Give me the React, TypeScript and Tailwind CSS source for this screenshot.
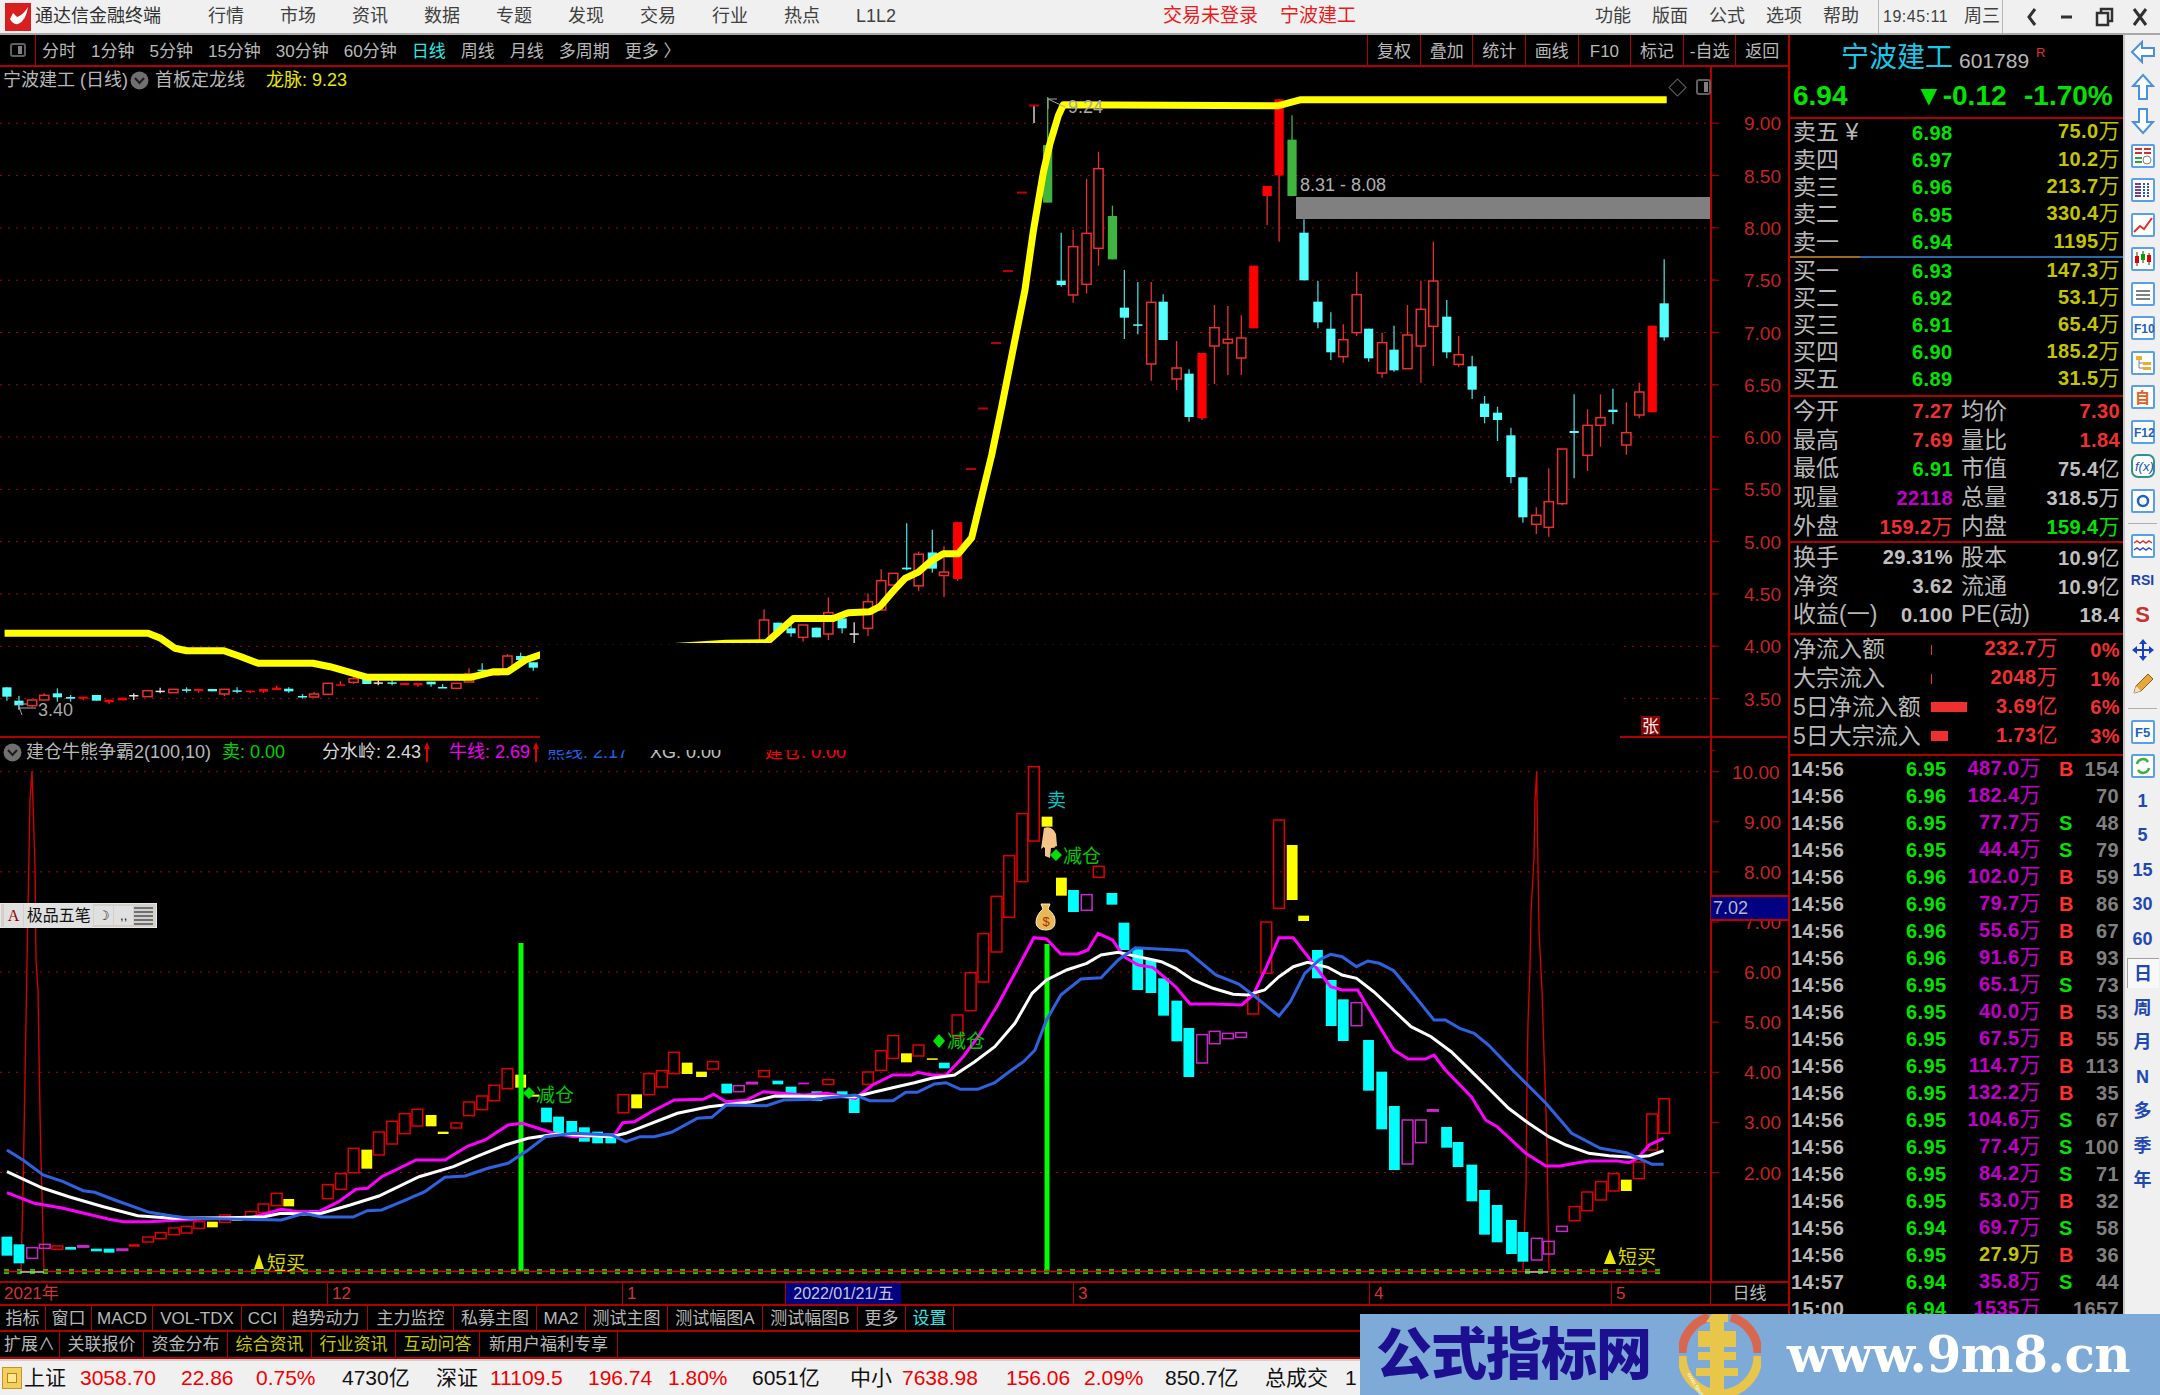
import type { ReactNode } from "react";

type Pt = [number, number];
type Candle = [string, number, number, number, number?, number?];

const z6 = (x: number, y: number): Pt => [1000 + x / 2.01, 60 + y / 3];
const z7 = (x: number, y: number): Pt => [x / 1.742, 560 + y / 3];
const z8 = (x: number, y: number): Pt => [880 + x / 1.742, 760 + y / 3];
const z9 = (x: number, y: number): Pt => [x / 1.742, 960 + y / 3];
const z11 = (x: number, y: number): Pt => [780 + x / 3, 90 + y / 2.904];

const line = (src: number[], map: (x: number, y: number) => Pt) => {
  const out: string[] = [];
  for (let i = 0; i < src.length; i += 2) {
    const [x, y] = map(src[i], src[i + 1]);
    out.push(`${x.toFixed(1)},${y.toFixed(1)}`);
  }
  return out.join(" ");
};

// candles read off the reference: kind, x, body top, body bottom, high, low
const mainLeft: Candle[] = [
  ["C", 12, 382, 410, 382, 422], ["C", 33, 422, 436, 408, 450], ["H", 56, 420, 437, 420, 442], ["H", 77, 406, 420, 400, 420],
  ["C", 100, 400, 412, 385, 425], ["C", 123, 411, 416, 405, 425], ["R", 145, 410, 416, 410, 420], ["C", 168, 405, 422],
  ["R", 190, 419, 427, 419, 431], ["R", 213, 413, 421], ["W", 233, 405, 406, 400, 420], ["H", 257, 392, 410], ["W", 279, 392, 393, 383, 400],
  ["H", 302, 388, 398], ["C", 325, 388, 391, 382, 398], ["R", 346, 387, 393, 387, 398], ["C", 370, 387, 394], ["H", 391, 388, 402, 388, 408],
  ["C", 413, 391, 394, 382, 400], ["R", 436, 392, 394, 392, 399], ["R", 459, 387, 395, 387, 399], ["R", 482, 383, 390, 377, 390],
  ["C", 503, 386, 394, 382, 398], ["C", 527, 408, 411, 402, 416], ["H", 547, 402, 411, 396, 411], ["H", 571, 370, 403], ["R", 593, 373, 375, 363, 375],
  ["H", 616, 356, 367, 350, 372], ["C", 639, 356, 372], ["W", 659, 367, 368, 360, 376], ["C", 683, 367, 371, 360, 376], ["R", 705, 369, 375],
  ["R", 728, 369, 376, 369, 380], ["C", 751, 365, 373, 365, 380], ["C", 771, 381, 384, 372, 384], ["H", 795, 370, 385], ["H", 817, 342, 366, 325, 366],
  ["C", 840, 329, 332, 310, 337], ["H", 862, 330, 345], ["H", 884, 288, 327, 282, 327], ["C", 907, 288, 300, 278, 305], ["C", 929, 307, 323, 307, 332],
  ["H", 1331, 180, 250, 148], ["C", 1355, 188, 215], ["C", 1378, 205, 220, 195, 230], ["H", 1399, 195, 232, 195, 245], ["C", 1422, 203, 232],
  ["H", 1443, 158, 222, 112, 240], ["C", 1467, 175, 205, 175, 220], ["W", 1488, 220, 222, 187, 250], ["H", 1512, 125, 205, 100, 228],
  ["H", 1535, 62, 150, 28, 150], ["H", 1556, 40, 75, 40, 75],
];

const mainMid: Candle[] = [
  ["C", 380, 1387, 1392, 1258, 1395], ["H", 416, 1348, 1440, 1340, 1455], ["C", 457, 1343, 1390, 1277, 1402],
  ["H", 492, 1400, 1410, 1325, 1472], ["R", 533, 1255, 1420, 1255, 1425], ["G", 803, 160, 327, 20, 327],
];

const mainRight: Candle[] = [
  ["C", 123, 662, 675, 518, 680], ["H", 147, 560, 705, 510, 728], ["H", 174, 520, 673, 357, 700], ["H", 198, 326, 565, 275, 617],
  ["G", 226, 468, 598, 437, 598], ["C", 250, 743, 773, 630, 837], ["C", 277, 793, 796, 666, 823], ["H", 304, 727, 912, 666, 962],
  ["C", 328, 725, 840, 703, 840], ["H", 355, 924, 957, 843, 990], ["C", 380, 941, 1071, 928, 1085], ["R", 406, 879, 1075, 879, 1080],
  ["H", 431, 803, 858, 735, 972], ["H", 458, 838, 849, 738, 945], ["H", 485, 834, 894, 766, 945], ["R", 510, 617, 805],
  ["R", 537, 378, 408, 378, 495], ["R", 561, 118, 346, 118, 545], ["G", 587, 239, 408, 166, 408], ["C", 611, 518, 661, 478, 661],
  ["C", 639, 725, 787, 662, 805], ["C", 665, 806, 877, 757, 900], ["H", 690, 839, 890, 793, 908], ["H", 717, 704, 818, 635, 828],
  ["C", 741, 806, 895, 806, 905], ["H", 768, 848, 939, 818, 953], ["C", 792, 869, 931, 797, 935], ["H", 819, 825, 926, 735, 926],
  ["H", 846, 748, 858, 662, 968], ["H", 871, 663, 799, 545, 918], ["C", 898, 770, 877, 720, 895], ["H", 922, 884, 913, 828, 922],
  ["C", 949, 919, 989, 887, 1017], ["C", 974, 1031, 1071, 1008, 1090], ["C", 1000, 1058, 1080, 1040, 1143], ["C", 1027, 1126, 1251, 1103, 1270],
  ["C", 1051, 1252, 1372, 1252, 1388], ["H", 1078, 1366, 1393, 1342, 1422], ["H", 1103, 1325, 1402, 1225, 1430], ["H", 1130, 1167, 1331, 1167, 1336],
  ["C", 1154, 1113, 1119, 1003, 1255], ["H", 1181, 1096, 1186, 1048, 1233], ["H", 1207, 1073, 1096, 1003, 1160], ["C", 1232, 1049, 1056, 986, 1093],
  ["H", 1259, 1118, 1155, 1027, 1184], ["H", 1285, 996, 1065, 968, 1075], ["R", 1311, 797, 1057], ["C", 1335, 730, 832, 598, 842],
];

const subLeft: Candle[] = [
  ["c", 12, 830, 887], ["c", 33, 853, 910], ["m", 56, 863, 895], ["m", 78, 853, 865], ["r", 100, 858, 868], ["c", 123, 861, 869], ["m", 145, 857, 859],
  ["c", 168, 866, 874], ["c", 190, 866, 878], ["m", 213, 867, 869], ["f", 234, 853, 860], ["r", 258, 831, 846], ["r", 280, 818, 836], ["r", 303, 804, 824],
  ["r", 325, 799, 819], ["r", 347, 785, 805], ["y", 370, 785, 802], ["r", 392, 765, 787], ["y", 413, 770, 783], ["r", 437, 755, 775], ["r", 459, 732, 757],
  ["r", 482, 700, 737], ["y", 503, 717, 739], ["y", 527, 752, 760], ["c", 547, 750, 760], ["r", 571, 674, 716], ["r", 594, 641, 688], ["r", 616, 565, 638],
  ["y", 639, 569, 626], ["r", 660, 516, 585], ["r", 683, 484, 552], ["r", 705, 461, 521], ["r", 727, 448, 498], ["y", 751, 465, 499], ["y", 772, 515, 522],
  ["r", 795, 489, 504], ["r", 817, 426, 467], ["r", 840, 408, 449], ["r", 861, 376, 422], ["r", 884, 326, 386], ["y", 907, 344, 383], ["y", 930, 404, 410],
  ["c", 952, 443, 487], ["c", 973, 470, 520], ["c", 996, 483, 520], ["c", 1018, 502, 545], ["c", 1041, 515, 550], ["c", 1064, 520, 550], ["r", 1086, 404, 458],
  ["y", 1109, 403, 445], ["r", 1131, 341, 404], ["r", 1153, 332, 381], ["r", 1174, 277, 341], ["y", 1197, 308, 342], ["y", 1222, 335, 351], ["r", 1242, 305, 327],
  ["c", 1266, 371, 400], ["m", 1287, 377, 395], ["m", 1310, 367, 369], ["r", 1331, 332, 350], ["c", 1355, 362, 373], ["c", 1378, 380, 405], ["n", 1400, 368, 373],
  ["c", 1423, 394, 423], ["r", 1443, 359, 373], ["c", 1467, 394, 408], ["c", 1488, 410, 459], ["r", 1512, 336, 373], ["r", 1535, 272, 331], ["r", 1556, 227, 295],
];

const subRight: Candle[] = [
  ["r", 67, 855, 888], ["y", 46, 880, 907], ["y", 91, 895, 898], ["c", 112, 908, 925], ["r", 135, 765, 830], ["r", 158, 638, 752], ["r", 180, 521, 666],
  ["r", 203, 409, 576], ["r", 225, 287, 472], ["r", 248, 161, 365], ["r", 268, 20, 243], ["y", 291, 170, 200], ["y", 295, 255, 263], ["r", 381, 319, 352],
  ["y", 316, 353, 407], ["c", 337, 390, 456], ["m", 360, 404, 451], ["c", 404, 399, 434], ["c", 425, 488, 570], ["c", 449, 565, 690], ["c", 472, 600, 699],
  ["c", 494, 655, 767], ["c", 517, 722, 844], ["c", 538, 804, 951], ["m", 561, 824, 909], ["m", 583, 814, 851], ["m", 606, 820, 836], ["m", 629, 818, 832],
  ["r", 650, 705, 762], ["r", 673, 486, 640], ["r", 695, 180, 445], ["y", 718, 255, 420], ["y", 738, 467, 483], ["c", 762, 570, 655], ["c", 786, 660, 798],
  ["c", 807, 718, 843], ["m", 830, 728, 797], ["c", 851, 840, 992], ["c", 874, 935, 1108], ["c", 896, 1038, 1230], ["m", 919, 1080, 1212], ["m", 942, 1080, 1148],
  ["m", 963, 1049, 1051], ["c", 987, 1101, 1163], ["c", 1007, 1146, 1221], ["c", 1031, 1214, 1324], ["c", 1053, 1290, 1424], ["c", 1075, 1335, 1447],
  ["c", 1100, 1380, 1482], ["c", 1120, 1416, 1505], ["m", 1144, 1435, 1500], ["m", 1165, 1444, 1482], ["m", 1188, 1399, 1414], ["r", 1210, 1340, 1382],
  ["r", 1232, 1296, 1352], ["r", 1256, 1265, 1320], ["r", 1278, 1241, 1293], ["y", 1300, 1259, 1293], ["r", 1322, 1206, 1256], ["r", 1345, 1062, 1170], ["r", 1366, 1016, 1120],
];

const magenta9 = [12, 698, 60, 730, 110, 745, 190, 778, 215, 785, 260, 785, 340, 778, 440, 772, 490, 748, 520, 755, 555, 755, 590, 725, 620, 688, 640, 685, 665, 650, 725, 600, 775, 600, 815, 558, 845, 540, 885, 495, 910, 490, 965, 520, 1000, 530, 1070, 525, 1085, 488, 1105, 485, 1135, 455, 1175, 420, 1225, 418, 1243, 403, 1265, 425, 1300, 420, 1330, 395, 1400, 405, 1440, 400, 1490, 415, 1520, 375, 1555, 345, 1568, 345];
const magenta8 = [55, 945, 65, 937, 90, 945, 115, 945, 145, 890, 175, 820, 205, 735, 235, 640, 268, 533, 290, 537, 315, 582, 345, 582, 362, 570, 380, 520, 405, 540, 425, 590, 450, 615, 475, 622, 515, 680, 540, 732, 580, 732, 630, 735, 650, 705, 672, 625, 695, 533, 720, 533, 750, 600, 785, 680, 805, 690, 832, 690, 860, 770, 895, 870, 920, 897, 950, 897, 965, 885, 985, 930, 1030, 1010, 1055, 1080, 1075, 1100, 1125, 1180, 1160, 1218, 1185, 1218, 1210, 1210, 1235, 1203, 1285, 1203, 1305, 1208, 1320, 1195, 1340, 1155, 1365, 1135];
const white9 = [12, 635, 75, 685, 120, 710, 180, 740, 240, 767, 300, 775, 400, 773, 460, 770, 490, 760, 530, 762, 560, 760, 610, 735, 660, 708, 730, 650, 790, 620, 830, 590, 880, 555, 920, 535, 970, 522, 1065, 530, 1090, 520, 1180, 460, 1235, 440, 1310, 425, 1350, 408, 1490, 410, 1525, 395, 1568, 378];
const white8 = [60, 968, 90, 955, 130, 945, 165, 905, 200, 860, 235, 790, 265, 700, 290, 660, 325, 630, 360, 610, 385, 585, 415, 577, 450, 590, 490, 605, 515, 625, 545, 660, 580, 685, 615, 703, 640, 705, 670, 690, 695, 650, 720, 620, 745, 607, 780, 622, 805, 645, 830, 655, 860, 695, 885, 735, 925, 800, 960, 830, 995, 875, 1025, 925, 1060, 985, 1095, 1045, 1130, 1090, 1165, 1130, 1195, 1155, 1235, 1180, 1270, 1187, 1310, 1192, 1340, 1187, 1365, 1172];
const blue9 = [12, 570, 40, 600, 75, 645, 110, 665, 145, 692, 165, 697, 200, 720, 260, 757, 300, 768, 330, 775, 490, 780, 530, 760, 560, 771, 615, 771, 640, 752, 665, 750, 700, 725, 740, 695, 775, 652, 810, 648, 850, 625, 885, 610, 920, 570, 950, 530, 1000, 520, 1065, 525, 1090, 545, 1115, 530, 1140, 530, 1170, 517, 1215, 475, 1240, 472, 1265, 435, 1335, 437, 1365, 420, 1420, 418, 1490, 405, 1515, 422, 1555, 422, 1568, 408];
const blue8 = [45, 997, 65, 997, 95, 972, 115, 968, 140, 988, 170, 988, 200, 968, 225, 935, 250, 905, 270, 870, 290, 780, 315, 705, 350, 657, 385, 653, 415, 600, 445, 563, 515, 570, 535, 573, 585, 645, 625, 672, 650, 705, 695, 768, 715, 725, 740, 640, 765, 600, 785, 583, 805, 590, 830, 620, 850, 603, 870, 610, 895, 632, 930, 705, 965, 780, 985, 780, 1010, 805, 1035, 820, 1060, 855, 1105, 935, 1160, 1030, 1205, 1120, 1255, 1165, 1300, 1178, 1345, 1213, 1365, 1213];
const spikeLeft = "21,1271 23,1193 26,1020 27,960 29,857 30,800 32,771 33,803 35,867 36,960 38,990 40,1113 41,1160 44,1271";
const spikeRight = "1523,1270 1526,1187 1527,1083 1528,1023 1530,967 1531,913 1534,857 1535,800 1536.7,771.7 1537,800 1538,867 1539,930 1542,990 1544,1053 1546,1113 1547,1153 1549,1270";

const yellowPts = [
  line([8, 220, 258, 220, 280, 235, 305, 265, 325, 272, 390, 272, 420, 290, 450, 310, 545, 310, 575, 320, 640, 352, 820, 352, 860, 335, 885, 335, 915, 300, 940, 285, 1265, 250, 1335, 248], z7),
  line([40, 1535, 160, 1535, 205, 1518, 270, 1515, 300, 1500, 340, 1455, 375, 1418, 415, 1400, 450, 1370, 490, 1347, 535, 1347, 575, 1300, 600, 1200, 635, 1060, 665, 920, 700, 750, 735, 580, 760, 410, 790, 240, 810, 155, 835, 75, 850, 43], z11),
  line([560, 137, 590, 125, 605, 119, 1340, 119], z6),
].join(" ");

function MainCandle({ c, map }: { c: Candle; map: (x: number, y: number) => Pt }) {
  const [kind, px, t, b, h, l] = c;
  const [x, top] = map(px, t);
  const bottom = map(px, b)[1];
  const hi = map(px, h ?? t)[1];
  const lo = map(px, l ?? b)[1];
  const color = kind === "H" || kind === "R" ? "#e8302c" : kind === "G" ? "#3fb53f" : kind === "W" ? "#e0e0e0" : "#40d8d8";
  const fill = kind === "H" ? "#000" : kind === "R" ? "#ff0000" : kind === "G" ? "#3fb53f" : kind === "W" ? "#e0e0e0" : "#55ffff";
  return (
    <g>
      <line x1={x} x2={x} y1={hi} y2={lo} stroke={color} strokeWidth={1.3} />
      <rect x={x - 4.6} y={top} width={9.2} height={Math.max(bottom - top, 1.5)} fill={fill} stroke={kind === "H" ? color : "none"} strokeWidth={1.5} />
    </g>
  );
}

function SubCandle({ c, map }: { c: Candle; map: (x: number, y: number) => Pt }) {
  const [kind, px, t, b] = c;
  const [x, top] = map(px, t);
  const bottom = map(px, b)[1];
  const stroke = kind === "r" ? "#e00000" : kind === "m" ? "#c828c8" : "none";
  const fill = kind === "c" ? "#00ffff" : kind === "y" ? "#ffff00" : kind === "f" ? "#ff0000" : kind === "n" ? "#ff00ff" : "none";
  return <rect x={x - 5.4} y={top} width={10.8} height={Math.max(bottom - top, 1.5)} fill={fill} stroke={stroke} strokeWidth={1.5} />;
}

const mainTicks = [9, 8.5, 8, 7.5, 7, 6.5, 6, 5.5, 5, 4.5, 4, 3.5];
const subTicks = [10, 9, 8, 7, 6, 5, 4, 3, 2];
const priceY = (p: number) => 123.3 + (9 - p) * 104.6;
const subY = (p: number) => 771.7 + (10 - p) * 50.1;

function Chart() {
  return (
    <svg width={1788} height={1214} viewBox="0 67 1788 1214" className="block">
      {mainTicks.map((p) => (
        <g key={p}>
          <line x1={0} x2={1711} y1={priceY(p)} y2={priceY(p)} stroke="#b00000" strokeWidth={1} strokeDasharray="2 6" />
          <line x1={1711} x2={1719} y1={priceY(p)} y2={priceY(p)} stroke="#b00000" />
          <line x1={1711} x2={1715} y1={priceY(p) + 52} y2={priceY(p) + 52} stroke="#b00000" />
          <text x={1744} y={priceY(p) + 7} fontSize={19} fill="#c42424">{p.toFixed(2)}</text>
        </g>
      ))}
      {subTicks.map((p) => (
        <g key={p}>
          {p % 2 === 0 && <line x1={0} x2={1711} y1={subY(p)} y2={subY(p)} stroke="#b00000" strokeWidth={1} strokeDasharray="2 6" />}
          <line x1={1711} x2={1719} y1={subY(p)} y2={subY(p)} stroke="#b00000" />
          <text x={p === 10 ? 1732 : 1744} y={subY(p) + 7} fontSize={19} fill="#c42424">{p.toFixed(2)}</text>
        </g>
      ))}
      <line x1={1711} x2={1711} y1={67} y2={1281} stroke="#b00000" strokeWidth={2} />
      <line x1={0} x2={1787} y1={737} y2={737} stroke="#b00000" strokeWidth={2} />

      {mainLeft.map((c, i) => <MainCandle key={i} c={c} map={z7} />)}
      {mainMid.map((c, i) => <MainCandle key={i} c={c} map={z11} />)}
      {mainRight.map((c, i) => <MainCandle key={i} c={c} map={z6} />)}

      <polyline points={yellowPts} fill="none" stroke="#ffff00" strokeWidth={7} strokeLinejoin="round" />
      <rect x={1296} y={197} width={414} height={22} fill="#808080" />
      <text x={1300} y={191} fontSize={18} fill="#b0b0b0">8.31 - 8.08</text>
      <text x={1068} y={113} fontSize={18} fill="#a8a8a8">9.24</text>
      <path d="M1048 99 v10 M1048 99 h9 M1048 99 l17 8" stroke="#a8a8a8" fill="none" />
      <line x1={1034} x2={1034} y1={106} y2={123} stroke="#d0d0d0" strokeWidth={1.5} />
      {[[1029, 105.5], [1017, 192.6], [1003, 271], [991, 343], [978, 408.5], [966, 469]].map(([x, y]) => (
        <line key={x} x1={x} x2={x + 10} y1={y} y2={y} stroke="#c00000" strokeWidth={2} />
      ))}
      <path d="M18 704 l4 11 M18 704 h9 M18 708 h18" stroke="#a8a8a8" fill="none" />
      <text x={38} y={716} fontSize={18} fill="#a8a8a8">3.40</text>

      {/* repaint glitch in the reference: this band of the chart is blanked */}
      <rect x={540} y={643} width={1080} height={107} fill="#000" />
      <line x1={540} x2={1620} y1={644.5} y2={644.5} stroke="#3c0000" strokeDasharray="2 6" />
      <rect x={1641} y={716} width={19} height={19} fill="#8c0000" />
      <text x={1642} y={732} fontSize={17} fill="#f0f0f0">张</text>

      <g fontSize={18}>
        <text x={547} y={758} fill="#2060e0">熊线: 2.17</text>
        <text x={650} y={758} fill="#c0c0c0">XG: 0.00</text>
        <text x={765} y={758} fill="#ff0000">建仓: 0.00</text>
      </g>
      <rect x={540} y={737} width={1080} height={13} fill="#000" />

      <polyline points={spikeLeft} fill="none" stroke="#d00000" strokeWidth={1.4} />
      <polyline points={spikeRight} fill="none" stroke="#d00000" strokeWidth={1.4} />

      {subLeft.map((c, i) => <SubCandle key={i} c={c} map={z9} />)}
      {subRight.map((c, i) => <SubCandle key={i} c={c} map={z8} />)}

      <rect x={518.5} y={943} width={5} height={329} fill="#00ff00" />
      <rect x={1044.5} y={944} width={5} height={328} fill="#00ff00" />

      <polyline points={`${line(magenta9, z9)} ${line(magenta8, z8)}`} fill="none" stroke="#ff00ff" strokeWidth={3} />
      <polyline points={`${line(white9, z9)} ${line(white8, z8)}`} fill="none" stroke="#ffffff" strokeWidth={3} />
      <polyline points={`${line(blue9, z9)} ${line(blue8, z8)}`} fill="none" stroke="#2f62e0" strokeWidth={3} />

      <line x1={4} x2={1665} y1={1271.5} y2={1271.5} stroke="#00d000" strokeWidth={5} strokeDasharray="5 8" />
      <line x1={4} x2={1660} y1={1271.5} y2={1271.5} stroke="#e00000" strokeWidth={1.5} />
      <line x1={20} x2={44} y1={1272} y2={1272} stroke="#b0c0b0" strokeWidth={1.5} />
      <line x1={1525} x2={1548} y1={1272} y2={1272} stroke="#b0c0b0" strokeWidth={1.5} />

      <g fontSize={19}>
        <path d="M523 1093 l6 -6 l6 6 l-6 6 z M1050 855 l6 -6 l6 6 l-6 6 z M933 1041 l6 -7 l6 7 l-6 7 z" fill="#00e000" />
        <text x={536} y={1102} fill="#00c800">减仓</text>
        <text x={1063} y={863} fill="#00c800">减仓</text>
        <text x={947} y={1048} fill="#00c800">减仓</text>
        <text x={1047} y={807} fill="#00c8c8">卖</text>
        <path d="M254 1269 l5 -15 l5 15 z M1604 1264 l6 -15 l6 15 z" fill="#e8e800" />
        <text x={267} y={1270} fill="#d8d800">短买</text>
        <text x={1618} y={1264} fill="#d8d800">短买</text>
      </g>

      <path d="M1044 828 q8 -3 12 6 l1 12 l-6 2 l-1 10 l-5 -2 l0 -10 l-4 3 z" fill="#f4c48c" />
      <path d="M1041 904 h9 l-2 5 q8 6 7 14 q-1 7 -9 7 q-9 0 -10 -7 q0 -8 7 -14 z" fill="#e8b858" stroke="#fff0c0" />
      <text x={1042.5} y={926} fontSize={13} fill="#a83000">$</text>

      <rect x={1711} y={896} width={77} height={24} fill="#000080" />
      <line x1={1711} x2={1788} y1={896} y2={896} stroke="#c00000" strokeWidth={2} />
      <line x1={1711} x2={1788} y1={920} y2={920} stroke="#c00000" strokeWidth={2} />
      <text x={1713} y={914} fontSize={18} fill="#b8b8c8">7.02</text>
    </svg>
  );
}

const menus = ["行情", "市场", "资讯", "数据", "专题", "发现", "交易", "行业", "热点", "L1L2"];
const rightMenus = ["功能", "版面", "公式", "选项", "帮助"];

function TitleBar() {
  return (
    <div className="flex h-[35px] shrink-0 items-center whitespace-nowrap border-b-2 border-[#a8a8a8] bg-[#f0f0f0] text-[18px] text-[#404040]">
      <svg width={26} height={28} viewBox="0 0 26 28" className="ml-[5px] shrink-0">
        <rect width={26} height={28} fill="#d81e1e" />
        <path d="M5 16 Q8 22 13 21 Q21 18 23 4 Q18 12 12 14 L8 10 Z" fill="#fff" />
      </svg>
      <span className="ml-[4px] w-[173px] shrink-0 text-[#303030]">通达信金融终端</span>
      <div className="flex shrink-0 gap-[36px]">
        {menus.map((m) => <span key={m} className="w-[36px]">{m}</span>)}
      </div>
      <span className="ml-[271px] w-[117px] shrink-0 text-[19px] text-[#e81c1c]">交易未登录</span>
      <span className="w-[76px] shrink-0 text-[19px] text-[#e81c1c]">宁波建工</span>
      <div className="ml-[239px] flex shrink-0 gap-[21px]">
        {rightMenus.map((m) => <span key={m} className="w-[36px]">{m}</span>)}
      </div>
      <div className="ml-[19px] flex h-full w-[125px] shrink-0 items-center border-x border-[#b8b8b8] pl-[4px] text-[16px]">
        <span className="w-[81px] tracking-[0.5px]">19:45:11</span>
        <span className="text-[18px]">周三</span>
      </div>
      <svg width={157} height={33} viewBox="0 0 157 33" fill="none" stroke="#303030" strokeWidth={3} className="shrink-0">
        <path d="M32 9 l-6 8 l6 8" />
        <path d="M58 17 h11" />
        <path d="M94 13 h11 v12 h-11 z M98 13 v-4 h11 v12 h-4" strokeWidth={2.5} />
        <path d="M131 9 l12 16 M143 9 l-12 16" />
      </svg>
    </div>
  );
}

const periods = ["分时", "1分钟", "5分钟", "15分钟", "30分钟", "60分钟", "日线", "周线", "月线", "多周期", "更多 〉"];
const tools = ["复权", "叠加", "统计", "画线", "F10", "标记", "-自选", "返回"];

function ToolBar() {
  return (
    <div className="flex h-[32px] shrink-0 items-center border-b-2 border-[#b00000] text-[17px] text-[#b8b8b8]">
      <div className="flex h-full w-[36px] items-center justify-center border-r border-[#b00000]">
        <div className="flex h-[14px] w-[16px] items-center justify-end rounded-[3px] border-2 border-[#606060] pr-[2px]">
          <div className="h-[8px] w-[4px] bg-[#808080]" />
        </div>
      </div>
      <div className="ml-[6px] flex gap-[15px] pt-[3px]">
        {periods.map((p) => <span key={p} className={p === "日线" ? "text-[#30e8e8]" : ""}>{p}</span>)}
      </div>
      <div className="ml-auto flex h-full">
        {tools.map((t) => (
          <span key={t} className="flex h-full w-[52.6px] items-center justify-center border-l border-[#b00000] pt-[3px]">{t}</span>
        ))}
      </div>
    </div>
  );
}

function LegendDot() {
  return (
    <svg width={19} height={19} viewBox="0 0 19 19" className="shrink-0">
      <circle cx={9.5} cy={9.5} r={9} fill="#707070" />
      <path d="M5 7 l4.5 5 l4.5 -5" stroke="#1c1c1c" strokeWidth={2} fill="none" />
    </svg>
  );
}

function UpArrow() {
  return (
    <svg width={8} height={20} viewBox="0 0 8 20" className="ml-[2px] shrink-0">
      <path d="M4 0 l3 7 h-2 v13 h-2 v-13 h-2 z" fill="#e00000" />
    </svg>
  );
}

function ImeBar() {
  return (
    <div className="absolute left-0 top-[836px] flex h-[25px] w-[157px] items-center gap-px border border-[#e8e8e8] bg-[#d4d0c8] px-[3px] text-[16px] text-[#101010]">
      <span className="w-[19px] bg-[#e0e0e0] text-center font-['Liberation_Serif'] text-[#900000]">A</span>
      <span className="w-[70px] whitespace-nowrap bg-[#e0e0e0] text-center">极品五笔</span>
      <span className="w-[19px] bg-[#e0e0e0] text-center text-[13px]">☽</span>
      <span className="w-[19px] bg-[#e0e0e0] text-center text-[13px]">,,</span>
      <span className="h-[19px] w-[19px] bg-[repeating-linear-gradient(0deg,#707070_0_2px,#d0d0d0_2px_4px)]" />
    </div>
  );
}

type Tab = { label: string; w: string; color?: string };
const tabs1: Tab[] = [
  { label: "指标", w: "w-[46px]" }, { label: "窗口", w: "w-[46px]" }, { label: "MACD", w: "w-[61px]" }, { label: "VOL-TDX", w: "w-[89px]" },
  { label: "CCI", w: "w-[42px]" }, { label: "趋势动力", w: "w-[84px]" }, { label: "主力监控", w: "w-[86px]" }, { label: "私募主图", w: "w-[83px]" },
  { label: "MA2", w: "w-[49px]" }, { label: "测试主图", w: "w-[82px]" }, { label: "测试幅图A", w: "w-[95px]" }, { label: "测试幅图B", w: "w-[95px]" },
  { label: "更多", w: "w-[48px]" }, { label: "设置", w: "w-[48px]", color: "text-[#30e8e8]" },
];
const tabs2: Tab[] = [
  { label: "扩展∧", w: "w-[60px]" }, { label: "关联报价", w: "w-[84px]" }, { label: "资金分布", w: "w-[84px]" },
  { label: "综合资讯", w: "w-[84px]", color: "text-[#c8c800]" }, { label: "行业资讯", w: "w-[84px]", color: "text-[#c8c800]" },
  { label: "互动问答", w: "w-[84px]", color: "text-[#c8c800]" }, { label: "新用户福利专享", w: "w-[138px]" },
];

function TabRow({ tabs, h }: { tabs: Tab[]; h: string }) {
  return (
    <div className={`flex ${h} shrink-0 border-b-2 border-[#b00000] text-[17px] leading-[25px] text-[#b8b8b8]`}>
      {tabs.map((t) => (
        <span key={t.label} className={`${t.w} ${t.color ?? ""} shrink-0 whitespace-nowrap border-r border-[#b00000] text-center`}>{t.label}</span>
      ))}
    </div>
  );
}

function TimeAxis() {
  const cell = "h-full shrink-0 border-r border-[#b00000] pl-[4px]";
  return (
    <div className="flex h-[25px] shrink-0 border-y-2 border-[#b00000] text-[17px] leading-[22px] text-[#d83030]">
      <span className={`${cell} w-[328px]`}>2021年</span>
      <span className={`${cell} w-[295px]`}>12</span>
      <span className={`${cell} w-[163px]`}>1</span>
      <span className="h-full w-[115px] shrink-0 bg-[#000080] text-center text-[16px] text-[#c8c8d8]">2022/01/21/五</span>
      <span className={`${cell} w-[173px]`} />
      <span className={`${cell} w-[296px]`}>3</span>
      <span className={`${cell} w-[242px]`}>4</span>
      <span className={`${cell} w-[99px]`}>5</span>
      <span className="h-full flex-1 text-center text-[#b8b8b8]">日线</span>
    </div>
  );
}

const label = "text-[23px] leading-none text-[#b8b8b8]";
const num = "text-[20px] font-bold leading-none tracking-[0.4px]";

function Val({ v, u, c }: { v: string; u?: string; c: string }) {
  return (
    <span className={`${num} ${c} whitespace-nowrap`}>
      {v}
      {u && <span className="text-[21px] font-normal">{u}</span>}
    </span>
  );
}

const green = "text-[#00e400]";
const olive = "text-[#c4c400]";
const red = "text-[#f03030]";
const grey = "text-[#c0c0c0]";
const purple = "text-[#c000c8]";

function Level({ name, price, vol, unit, h }: { name: string; price: string; vol: string; unit: string; h: string }) {
  return (
    <div className={`flex ${h} shrink-0 items-center pl-[3px] pr-[3px]`}>
      <span className={`${label} w-[119px] whitespace-nowrap`}>{name}</span>
      <span className={`${num} ${green} w-[60px]`}>{price}</span>
      <span className="flex-1 text-right"><Val v={vol} u={unit} c={olive} /></span>
    </div>
  );
}

function Pair({ a, av, b, bv }: { a: string; av: ReactNode; b: string; bv: ReactNode }) {
  return (
    <div className="flex h-[28.8px] shrink-0 items-center pl-[3px] pr-[3px]">
      <div className="flex w-[160px] items-center justify-between">
        <span className={`${label} whitespace-nowrap`}>{a}</span>
        {av}
      </div>
      <div className="ml-[8px] flex flex-1 items-center justify-between">
        <span className={`${label} whitespace-nowrap`}>{b}</span>
        {bv}
      </div>
    </div>
  );
}

function Flow({ name, bar, v, u, pct }: { name: string; bar: string; v: string; u: string; pct: string }) {
  return (
    <div className="flex h-[28.8px] shrink-0 items-center pl-[3px] pr-[3px]">
      <span className={`${label} w-[138px] whitespace-nowrap`}>{name}</span>
      <span className={`${bar} bg-[#f03030]`} />
      <span className="ml-auto"><Val v={v} u={u} c={red} /></span>
      <span className={`${num} ${red} w-[62px] text-right`}>{pct}</span>
    </div>
  );
}

const ticks: [string, string, string, string, string, string?][] = [
  ["14:56", "6.95", "487.0", "万", "B", "154"], ["14:56", "6.96", "182.4", "万", "", "70"], ["14:56", "6.95", "77.7", "万", "S", "48"], ["14:56", "6.95", "44.4", "万", "S", "79"],
  ["14:56", "6.96", "102.0", "万", "B", "59"], ["14:56", "6.96", "79.7", "万", "B", "86"], ["14:56", "6.96", "55.6", "万", "B", "67"], ["14:56", "6.96", "91.6", "万", "B", "93"],
  ["14:56", "6.95", "65.1", "万", "S", "73"], ["14:56", "6.95", "40.0", "万", "B", "53"], ["14:56", "6.95", "67.5", "万", "B", "55"], ["14:56", "6.95", "114.7", "万", "B", "113"],
  ["14:56", "6.95", "132.2", "万", "B", "35"], ["14:56", "6.95", "104.6", "万", "S", "67"], ["14:56", "6.95", "77.4", "万", "S", "100"], ["14:56", "6.95", "84.2", "万", "S", "71"],
  ["14:56", "6.95", "53.0", "万", "B", "32"], ["14:56", "6.94", "69.7", "万", "S", "58"], ["14:56", "6.95", "27.9", "万", "B", "36"], ["14:57", "6.94", "35.8", "万", "S", "44"],
  ["15:00", "6.94", "1535", "万", "", "1657"],
];

function Rule({ mt }: { mt: string }) {
  return <div className={`${mt} h-[2px] shrink-0 bg-[#b00000]`} />;
}

function QuotePanel() {
  return (
    <div className="flex w-[335px] shrink-0 flex-col overflow-hidden border-l-2 border-[#b00000]">
      <div className="flex h-[84px] shrink-0 flex-col border-b-2 border-[#b00000]">
        <div className="flex h-[40px] items-end pl-[51px]">
          <span className="text-[28px] leading-[34px] text-[#18c8e8]">宁波建工</span>
          <span className="ml-[6px] text-[21px] leading-[28px] text-[#b8b8b8]">601789</span>
          <span className="mb-[16px] ml-[7px] text-[13px] leading-none text-[#e03030]">R</span>
        </div>
        <div className="flex flex-1 items-center pl-[3px] pr-[4px] text-[28px] font-bold leading-none text-[#00e400]">
          <span className="w-[122px]">6.94</span>
          <span className="w-[109px] whitespace-nowrap">▼-0.12</span>
          <span>-1.70%</span>
        </div>
      </div>
      <Level h="h-[27.4px]" name="卖五 ¥" price="6.98" vol="75.0" unit="万" />
      <Level h="h-[27.4px]" name="卖四" price="6.97" vol="10.2" unit="万" />
      <Level h="h-[27.4px]" name="卖三" price="6.96" vol="213.7" unit="万" />
      <Level h="h-[27.4px]" name="卖二" price="6.95" vol="330.4" unit="万" />
      <Level h="h-[27.4px]" name="卖一" price="6.94" vol="1195" unit="万" />
      <div className="flex h-[2px] shrink-0">
        <div className="w-[70px] bg-[#a06820]" />
        <div className="flex-1 bg-[#2868a8]" />
      </div>
      <Level h="h-[27px]" name="买一" price="6.93" vol="147.3" unit="万" />
      <Level h="h-[27px]" name="买二" price="6.92" vol="53.1" unit="万" />
      <Level h="h-[27px]" name="买三" price="6.91" vol="65.4" unit="万" />
      <Level h="h-[27px]" name="买四" price="6.90" vol="185.2" unit="万" />
      <Level h="h-[27px]" name="买五" price="6.89" vol="31.5" unit="万" />
      <Rule mt="mt-[2px]" />
      <Pair a="今开" av={<Val v="7.27" c={red} />} b="均价" bv={<Val v="7.30" c={red} />} />
      <Pair a="最高" av={<Val v="7.69" c={red} />} b="量比" bv={<Val v="1.84" c={red} />} />
      <Pair a="最低" av={<Val v="6.91" c={green} />} b="市值" bv={<Val v="75.4" u="亿" c={grey} />} />
      <Pair a="现量" av={<Val v="22118" c={purple} />} b="总量" bv={<Val v="318.5" u="万" c={grey} />} />
      <Pair a="外盘" av={<Val v="159.2" u="万" c={red} />} b="内盘" bv={<Val v="159.4" u="万" c={green} />} />
      <Rule mt="mt-0" />
      <Pair a="换手" av={<Val v="29.31%" c={grey} />} b="股本" bv={<Val v="10.9" u="亿" c={grey} />} />
      <Pair a="净资" av={<Val v="3.62" c={grey} />} b="流通" bv={<Val v="10.9" u="亿" c={grey} />} />
      <Pair a="收益(一)" av={<Val v="0.100" c={grey} />} b="PE(动)" bv={<Val v="18.4" c={grey} />} />
      <Rule mt="mt-[4px]" />
      <Flow name="净流入额" bar="h-[10px] w-[1px]" v="232.7" u="万" pct="0%" />
      <Flow name="大宗流入" bar="h-[10px] w-[1px]" v="2048" u="万" pct="1%" />
      <Flow name="5日净流入额" bar="h-[10px] w-[36px]" v="3.69" u="亿" pct="6%" />
      <Flow name="5日大宗流入" bar="h-[10px] w-[17px]" v="1.73" u="亿" pct="3%" />
      <Rule mt="mt-[3px]" />
      {ticks.map((t, i) => (
        <div key={i} className="flex h-[27px] shrink-0 items-center pl-[1px] pr-[4px]">
          <span className={`${num} w-[115px] text-[#b8b8b8]`}>{t[0]}</span>
          <span className={`${num} ${green} w-[41px]`}>{t[1]}</span>
          <span className="w-[94px] text-right"><Val v={t[2]} u={t[3]} c={t[2] === "27.9" ? olive : purple} /></span>
          <span className={`${num} ml-[18px] w-[14px] ${t[4] === "B" ? "text-[#ff3030]" : green}`}>{t[4]}</span>
          <span className={`${num} flex-1 text-right text-[#808080]`}>{t[5]}</span>
        </div>
      ))}
    </div>
  );
}

function IconBox({ children }: { children: ReactNode }) {
  return (
    <svg width={24} height={24} viewBox="0 0 24 24">
      <rect x={1} y={1} width={22} height={22} rx={1} fill="#fff" stroke="#58a0e8" strokeWidth={2} />
      {children}
    </svg>
  );
}

function Side({ children }: { children: ReactNode }) {
  return <div className="flex h-[34.5px] shrink-0 items-center justify-center">{children}</div>;
}

const arrowStroke = { fill: "#fff", stroke: "#4a90e0", strokeWidth: 2 };

function SideBar() {
  const letters = ["1", "5", "15", "30", "60"];
  const cjk = ["周", "月", "N", "多", "季", "年"];
  const txt = "text-[18px] font-bold leading-none text-[#2048b0]";
  return (
    <div className="flex flex-1 flex-col overflow-hidden border-l-2 border-[#c8c8c8] bg-[#f0f0f0]">
      <Side><svg width={26} height={24} viewBox="0 0 26 24"><path d="M2 12 L12 2 V8 H24 V16 H12 V22 Z" {...arrowStroke} /></svg></Side>
      <Side><svg width={24} height={28} viewBox="0 0 24 28"><path d="M12 2 L22 13 H16 V26 H8 V13 H2 Z" {...arrowStroke} /></svg></Side>
      <Side><svg width={24} height={28} viewBox="0 0 24 28"><path d="M12 26 L22 15 H16 V2 H8 V15 H2 Z" {...arrowStroke} /></svg></Side>
      <Side><IconBox><path d="M4 5 h7 M4 9 h7 M13 5 h7 M13 9 h7" stroke="#d03030" strokeWidth={2} /><path d="M4 14 h7 M4 18 h7" stroke="#30a030" strokeWidth={2} /><circle cx={16} cy={16} r={4} fill="none" stroke="#808080" /></IconBox></Side>
      <Side><IconBox><path d="M5 5 v14 M9 5 v14 M13 5 v14 M17 5 v14" stroke="#3050d0" strokeWidth={2} strokeDasharray="2 1" /><path d="M7 5 v14" stroke="#d03030" strokeWidth={2} strokeDasharray="2 1" /></IconBox></Side>
      <Side><IconBox><path d="M3 19 L9 13 L13 16 L21 5" stroke="#e03030" strokeWidth={2} fill="none" /></IconBox></Side>
      <Side><IconBox><path d="M6 5 v14 M12 4 v12 M18 6 v12" stroke="#303030" /><rect x={4} y={9} width={4} height={7} fill="#e00000" /><rect x={10} y={7} width={4} height={6} fill="#00a000" /><rect x={16} y={8} width={4} height={7} fill="#e00000" /></IconBox></Side>
      <Side><IconBox><path d="M5 9 h14 M5 13 h14 M5 17 h14" stroke="#808080" strokeWidth={2} /></IconBox></Side>
      <Side><IconBox><text x={3} y={17} fontSize={12} fontWeight={700} fill="#2060c0">F10</text></IconBox></Side>
      <Side><IconBox><rect x={5} y={5} width={6} height={4} fill="#e8b030" /><rect x={12} y={11} width={8} height={3} fill="#e8b030" /><rect x={12} y={16} width={8} height={3} fill="#e8b030" /><path d="M8 9 v8 h4 M8 12 h4" stroke="#808080" fill="none" /></IconBox></Side>
      <Side><IconBox><text x={4} y={18} fontSize={15} fontWeight={700} fill="#e06020">自</text></IconBox></Side>
      <Side><IconBox><text x={3} y={17} fontSize={12} fontWeight={700} fill="#2060c0">F12</text></IconBox></Side>
      <Side><svg width={24} height={24} viewBox="0 0 24 24"><rect x={1} y={1} width={22} height={22} rx={6} fill="#fff" stroke="#309090" strokeWidth={2} /><text x={4} y={17} fontSize={13} fontStyle="italic" fill="#2050b0">f(x)</text></svg></Side>
      <Side><IconBox><circle cx={12} cy={12} r={5} fill="none" stroke="#2060c0" strokeWidth={2.5} /></IconBox></Side>
      <div className="mx-[3px] my-[5px] h-px shrink-0 bg-[#b0b0b0]" />
      <Side><IconBox><path d="M3 9 l3 -2 l3 2 l3 -2 l3 2 l3 -2 l3 2" stroke="#e03030" fill="none" strokeWidth={1.5} /><path d="M3 16 l3 -2 l3 2 l3 -2 l3 2 l3 -2 l3 2" stroke="#3050d0" fill="none" strokeWidth={1.5} /></IconBox></Side>
      <Side><span className="text-[14px] font-bold text-[#2040b0]">RSI</span></Side>
      <Side><span className="text-[22px] font-bold leading-none text-[#c83030]">S</span></Side>
      <Side><svg width={24} height={24} viewBox="0 0 24 24" fill="#1840c0"><path d="M12 1 l4 5 h-3 v5 h5 v-3 l5 4 l-5 4 v-3 h-5 v5 h3 l-4 5 l-4 -5 h3 v-5 h-5 v3 l-5 -4 l5 -4 v3 h5 v-5 h-3 z" /></svg></Side>
      <Side><svg width={24} height={24} viewBox="0 0 24 24"><path d="M3 21 l2 -7 l12 -12 l5 5 l-12 12 z" fill="#e8a838" stroke="#806020" /><path d="M3 21 l2 -7 l5 5 z" fill="#f0e0c0" /></svg></Side>
      <div className="mx-[3px] my-[6px] h-px shrink-0 bg-[#b0b0b0]" />
      <Side><IconBox><text x={4} y={17} fontSize={13} fontWeight={700} fill="#2060c0">F5</text></IconBox></Side>
      <Side><IconBox><path d="M6 10 a6 6 0 0 1 11 -2 M18 14 a6 6 0 0 1 -11 2" stroke="#40b040" strokeWidth={2.5} fill="none" /></IconBox></Side>
      {letters.map((l) => <Side key={l}><span className={txt}>{l}</span></Side>)}
      <Side><span className={`${txt} flex h-[30px] w-[32px] items-center justify-center border-l border-t border-[#a0a0a0] bg-[#f8f8f8]`}>日</span></Side>
      {cjk.map((l) => <Side key={l}><span className={txt}>{l}</span></Side>)}
    </div>
  );
}

type Stat = { t: string; w: string; c: string };
const stats: Stat[] = [
  { t: "上证", w: "w-[56px]", c: "text-[#101010]" }, { t: "3058.70", w: "w-[101px]", c: "text-[#f00000]" }, { t: "22.86", w: "w-[75px]", c: "text-[#f00000]" },
  { t: "0.75%", w: "w-[86px]", c: "text-[#f00000]" }, { t: "4730亿", w: "w-[94px]", c: "text-[#101010]" }, { t: "深证", w: "w-[54px]", c: "text-[#101010]" },
  { t: "11109.5", w: "w-[98px]", c: "text-[#f00000]" }, { t: "196.74", w: "w-[80px]", c: "text-[#f00000]" }, { t: "1.80%", w: "w-[84px]", c: "text-[#f00000]" },
  { t: "6051亿", w: "w-[98px]", c: "text-[#101010]" }, { t: "中小", w: "w-[52px]", c: "text-[#101010]" }, { t: "7638.98", w: "w-[104px]", c: "text-[#f00000]" },
  { t: "156.06", w: "w-[78px]", c: "text-[#f00000]" }, { t: "2.09%", w: "w-[81px]", c: "text-[#f00000]" }, { t: "850.7亿", w: "w-[100px]", c: "text-[#101010]" },
  { t: "总成交", w: "w-[80px]", c: "text-[#101010]" }, { t: "1", w: "w-[14px]", c: "text-[#101010]" },
];

function StatusBar() {
  return (
    <div className="flex h-[36px] shrink-0 items-center border-t-2 border-[#d0d0d0] bg-[#f0f0f0] text-[21px]">
      <div className="ml-[2px] mr-[2px] flex h-[22px] w-[20px] items-center justify-center border border-[#d09020] bg-[#f0d060]">
        <div className="h-[10px] w-[10px] border border-[#c08010] bg-[#ffe890]" />
      </div>
      {stats.map((s) => <span key={s.t} className={`${s.w} ${s.c} shrink-0 whitespace-nowrap`}>{s.t}</span>)}
    </div>
  );
}

function Banner() {
  return (
    <div className="absolute bottom-0 right-0 flex h-[81px] w-[800px] items-center bg-[#7eaad8]">
      <span className="ml-[16px] w-[280px] whitespace-nowrap text-[56px] font-black leading-none tracking-[-1px] text-[#1c1090]">公式指标网</span>
      <svg width={82} height={81} viewBox="0 0 82 81" className="ml-[23px] shrink-0">
        <path d="M3 39 A38 38 0 0 1 30 3" fill="none" stroke="#d9664f" strokeWidth={9} />
        <path d="M79 39 A38 38 0 0 0 52 3" fill="none" stroke="#d9664f" strokeWidth={9} />
        <path d="M3 42 A38 38 0 0 0 79 42" fill="none" stroke="#e8c64a" strokeWidth={9} />
        <path d="M33 0 h16 v8 h-4 v9 h12 v16 h-12 v5 h12 v8 h-12 v8 h14 v8 h-14 v19 h-14 v-19 h-14 v-8 h14 v-8 h-12 v-8 h12 v-5 h-12 v-16 h12 v-9 h-4 z" fill="#e8c64a" />
        <text x={8} y={60} fontSize={6} fill="#fff" transform="rotate(60 8 60)">www.9m8.cn</text>
      </svg>
      <span className="ml-[26px] whitespace-nowrap font-['DejaVu_Serif'] text-[50px] font-bold leading-none tracking-[-0.5px] text-white">www.9m8.cn</span>
    </div>
  );
}

export default function App() {
  return (
    <div className="relative flex h-[1395px] w-[2160px] flex-col overflow-hidden bg-black font-['Liberation_Sans','Noto_Sans_CJK_SC',sans-serif]">
      <TitleBar />
      <div className="flex min-h-0 flex-1">
        <div className="flex w-[1788px] shrink-0 flex-col">
          <ToolBar />
          <div className="relative h-[1214px] shrink-0 overflow-hidden">
            <Chart />
            <div className="absolute left-[3px] top-[2px] flex items-center text-[18px] leading-[22px] text-[#b8b8b8]">
              <span className="w-[127px] whitespace-nowrap">宁波建工 (日线)</span>
              <LegendDot />
              <span className="ml-[6px] w-[111px] whitespace-nowrap">首板定龙线</span>
              <span className="text-[#e8e800]">龙脉: 9.23</span>
            </div>
            <div className="absolute left-[3px] top-[674px] flex items-center text-[18px] leading-[22px] text-[#b8b8b8]">
              <LegendDot />
              <span className="ml-[4px] w-[196px] whitespace-nowrap">建仓牛熊争霸2(100,10)</span>
              <span className="w-[100px] whitespace-nowrap text-[#00d000]">卖: 0.00</span>
              <span className="whitespace-nowrap text-[#d8d8d8]">分水岭: 2.43</span>
              <UpArrow />
              <span className="ml-[18px] whitespace-nowrap text-[#f000f0]">牛线: 2.69</span>
              <UpArrow />
            </div>
            <ImeBar />
            <div className="absolute right-[77px] top-[12px] flex items-center gap-[12px]">
              <span className="block h-[13px] w-[13px] rotate-45 border border-[#606060]" />
              <div className="flex h-[16px] w-[15px] items-center justify-end rounded-[3px] border-2 border-[#606060] pr-[1px]">
                <div className="h-[10px] w-[4px] bg-[#808080]" />
              </div>
            </div>
          </div>
          <TimeAxis />
          <TabRow tabs={tabs1} h="h-[26px]" />
          <TabRow tabs={tabs2} h="h-[27px]" />
        </div>
        <QuotePanel />
        <SideBar />
      </div>
      <StatusBar />
      <Banner />
    </div>
  );
}
